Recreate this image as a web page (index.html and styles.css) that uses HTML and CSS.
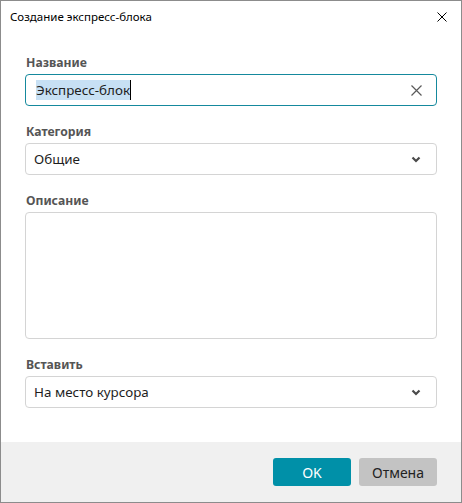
FILE: index.html
```html
<!DOCTYPE html>
<html lang="ru">
<head>
    <meta charset="UTF-8">
    <title>Создание экспресс-блока</title>
    <link rel="stylesheet" href="styles.css">
</head>
<body>

<div class="window">
    <div class="titlebar">
        <span class="title">Создание экспресс-блока</span>
        <span class="close">
            <svg width="10" height="10" viewBox="0 0 10 10"><path d="M0.5 0.5L9.5 9.5M9.5 0.5L0.5 9.5" stroke="#000" stroke-width="1"/></svg>
        </span>
    </div>

    <div class="content">
        <div class="field">
            <label>Название</label>
            <div class="input active">
                <span class="value"><span class="selected">Экспресс-блок</span><span class="caret"></span></span>
                <svg class="clear" width="11" height="11" viewBox="0 0 11 11"><path d="M0.5 0.5L10.5 10.5M10.5 0.5L0.5 10.5" stroke="#5a5a5a" stroke-width="1.2"/></svg>
            </div>
        </div>
        <div class="field">
            <label>Категория</label>
            <div class="input">
                <span class="value">Общие</span>
                <svg class="chevron" width="10" height="7" viewBox="0 0 10 7"><path d="M1.5 1.5L5 5L8.5 1.5" fill="none" stroke="#4a4a4a" stroke-width="2.2"/></svg>
            </div>
        </div>
        <div class="field">
            <label>Описание</label>
            <div class="textarea"></div>
        </div>
        <div class="field">
            <label>Вставить</label>
            <div class="input">
                <span class="value">На место курсора</span>
                <svg class="chevron" width="10" height="7" viewBox="0 0 10 7"><path d="M1.5 1.5L5 5L8.5 1.5" fill="none" stroke="#4a4a4a" stroke-width="2.2"/></svg>
            </div>
        </div>
    </div>

    <div class="footer">
        <button class="btn btn-ok">OK</button>
        <button class="btn btn-cancel">Отмена</button>
    </div>
</div>

</body>
</html>
```

FILE: styles.css
```css
body {
    margin: 0;
    font-family: 'Noto Sans', sans-serif;
    background: #fff;
}
.window {
    width: 462px;
    height: 503px;
    box-sizing: border-box;
    border: 1px solid #8c8c8c;
    display: flex;
    flex-direction: column;
    background: #fff;
}
.titlebar {
    height: 31px;
    display: flex;
    align-items: center;
    justify-content: space-between;
    padding: 0 9px 0 9px;
}
.title {
    font-size: 11.5px;
    color: #000;
}
.close {
    display: flex;
    margin-right: 5px;
}
.content {
    flex: 1;
    padding: 20px 24px 0 24px;
}
.field {
    margin-bottom: 15px;
}
label {
    display: block;
    height: 21px;
    line-height: 22px;
    margin-bottom: 1px;
    padding-left: 1px;
    font-size: 12.2px;
    font-weight: bold;
    color: #555;
}
.input {
    height: 32px;
    box-sizing: border-box;
    border: 1px solid #d4d4d4;
    border-radius: 4px;
    display: flex;
    align-items: center;
    justify-content: space-between;
    padding: 0 15px 0 8px;
    font-size: 13.4px;
    color: #1e1e1e;
}
.input.active {
    border: 1.5px solid #15899d;
    padding-left: 10px;
}
.value {
    display: flex;
    align-items: center;
}
.selected {
    background: #c7e0f4;
    line-height: 20px;
}
.caret {
    width: 1px;
    height: 20px;
    background: #000;
}
.clear {
    margin-right: -1px;
}
.textarea {
    height: 127px;
    box-sizing: border-box;
    border: 1px solid #d4d4d4;
    border-radius: 4px;
}
.footer {
    height: 60px;
    background: #f0f0f0;
    display: flex;
    justify-content: flex-end;
    align-items: center;
    gap: 8px;
    padding: 0 24px 0 0;
}
.btn {
    width: 78px;
    height: 28px;
    border: none;
    border-radius: 3px;
    font-family: 'Noto Sans', sans-serif;
    font-size: 14px;
    cursor: pointer;
}
.btn-ok {
    background: #0090a8;
    color: #fff;
}
.btn-cancel {
    background: #c3c3c3;
    color: #222;
}
```
